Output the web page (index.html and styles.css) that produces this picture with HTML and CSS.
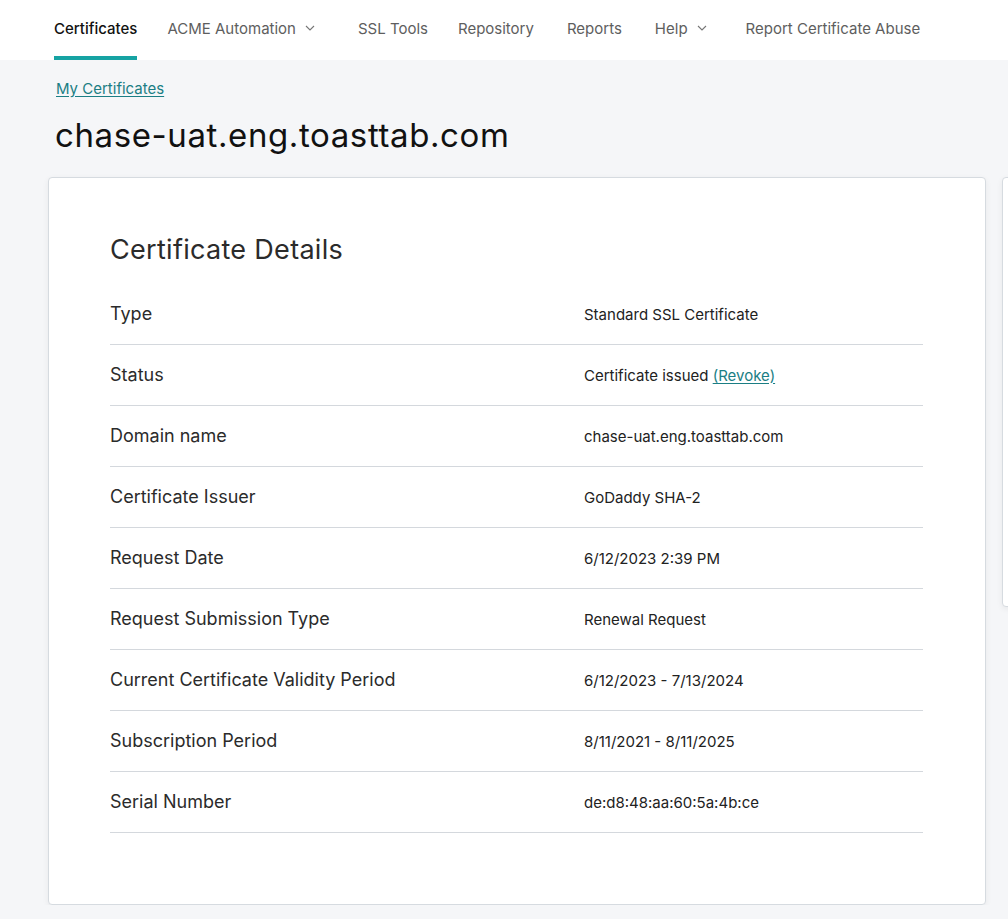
FILE: index.html
```html
<!DOCTYPE html>
<html lang="en">
<head>
<meta charset="utf-8">
<title>chase-uat.eng.toasttab.com</title>
<link rel="stylesheet" href="styles.css">
</head>
<body>
<header class="topnav">
  <nav class="nav-list">
    <a class="nav-item active" href="#">Certificates</a>
    <a class="nav-item" href="#">ACME Automation <svg class="chev" viewBox="0 0 10 6" width="10" height="6"><path d="M1 1l4 4 4-4" fill="none" stroke="currentColor" stroke-width="1.1"/></svg></a>
    <a class="nav-item" href="#">SSL Tools</a>
    <a class="nav-item" href="#">Repository</a>
    <a class="nav-item" href="#">Reports</a>
    <a class="nav-item" href="#">Help <svg class="chev" viewBox="0 0 10 6" width="10" height="6"><path d="M1 1l4 4 4-4" fill="none" stroke="currentColor" stroke-width="1.1"/></svg></a>
    <a class="nav-item" href="#">Report Certificate Abuse</a>
  </nav>
</header>
<main class="page">
  <a class="crumb" href="#">My Certificates</a>
  <h1 class="title">chase-uat.eng.toasttab.com</h1>
  <div class="cards">
    <section class="card main">
      <h2 class="card-title">Certificate Details</h2>
      <div class="rows">
        <div class="row"><div class="label">Type</div><div class="value">Standard SSL Certificate</div></div>
        <div class="row"><div class="label">Status</div><div class="value">Certificate issued <a class="link" href="#">(Revoke)</a></div></div>
        <div class="row"><div class="label">Domain name</div><div class="value">chase-uat.eng.toasttab.com</div></div>
        <div class="row"><div class="label">Certificate Issuer</div><div class="value">GoDaddy SHA-2</div></div>
        <div class="row"><div class="label">Request Date</div><div class="value">6/12/2023 2:39 PM</div></div>
        <div class="row"><div class="label">Request Submission Type</div><div class="value">Renewal Request</div></div>
        <div class="row"><div class="label">Current Certificate Validity Period</div><div class="value">6/12/2023 - 7/13/2024</div></div>
        <div class="row"><div class="label">Subscription Period</div><div class="value">8/11/2021 - 8/11/2025</div></div>
        <div class="row"><div class="label">Serial Number</div><div class="value">de:d8:48:aa:60:5a:4b:ce</div></div>
      </div>
    </section>
    <aside class="card side"></aside>
  </div>
</main>
</body>
</html>
```
FILE: styles.css
```css
* { box-sizing: border-box; }
html, body { margin: 0; padding: 0; }
body {
  font-family: Inter, "Noto Sans", "Liberation Sans", sans-serif;
  background: #f5f6f8;
  color: #111;
  overflow: hidden;
}
.topnav {
  background: #fff;
  height: 60px;
}
.nav-list {
  display: flex;
  height: 60px;
  padding-left: 54px;
}
.nav-item {
  display: flex;
  align-items: center;
  gap: 8px;
  height: 60px;
  font-size: 15px;
  color: #5e5e5e;
  text-decoration: none;
  border-bottom: 4px solid transparent;
  margin-right: 33px;
  white-space: nowrap;
}
.nav-item:nth-child(1) { margin-right: 30px; }
.nav-item:nth-child(2) { margin-right: 43px; }
.nav-item:nth-child(3) { margin-right: 30px; }
.nav-item:nth-child(6) { margin-right: 39px; }
.nav-item.active {
  color: #111;
  font-weight: 500;
  border-bottom-color: #16a3a3;
}
.chev { color: #767676; margin-left: 1px; }
.page {
  padding: 18px 0 0 48px;
}
.crumb {
  display: inline-block;
  margin-left: 8px;
  font-size: 15px;
  color: #1b7e84;
  text-decoration: underline;
  text-underline-offset: 2px;
}
.title {
  margin: 17px 0 22px 7px;
  font-size: 33px;
  letter-spacing: 0.6px;
  font-weight: 400;
  color: #111;
  line-height: 40px;
}
.cards {
  display: flex;
  gap: 16px;
  align-items: flex-start;
}
.card {
  background: #fff;
  border: 1px solid #d6dbe0;
  border-radius: 4px;
  box-shadow: 0 2px 6px rgba(0,0,0,0.06);
  flex: none;
}
.card.main {
  width: 938px;
  padding: 54px 62px 71px 61px;
}
.card.side {
  width: 200px;
  height: 430px;
}
.card-title {
  margin: 0 0 16px;
  font-size: 27px;
  letter-spacing: 0.3px;
  font-weight: 400;
  color: #2b2b2b;
  line-height: 36px;
}
.row {
  display: grid;
  grid-template-columns: 474px 1fr;
  align-items: center;
  height: 61px;
  border-bottom: 1px solid #d4d8dd;
}
.label {
  font-size: 18px;
  color: #2b2b2b;
  margin-top: -2px;
}
.value {
  font-size: 15px;
  color: #222;
}
.link {
  color: #1b7e84;
  text-decoration: underline;
  text-underline-offset: 2px;
}
```
